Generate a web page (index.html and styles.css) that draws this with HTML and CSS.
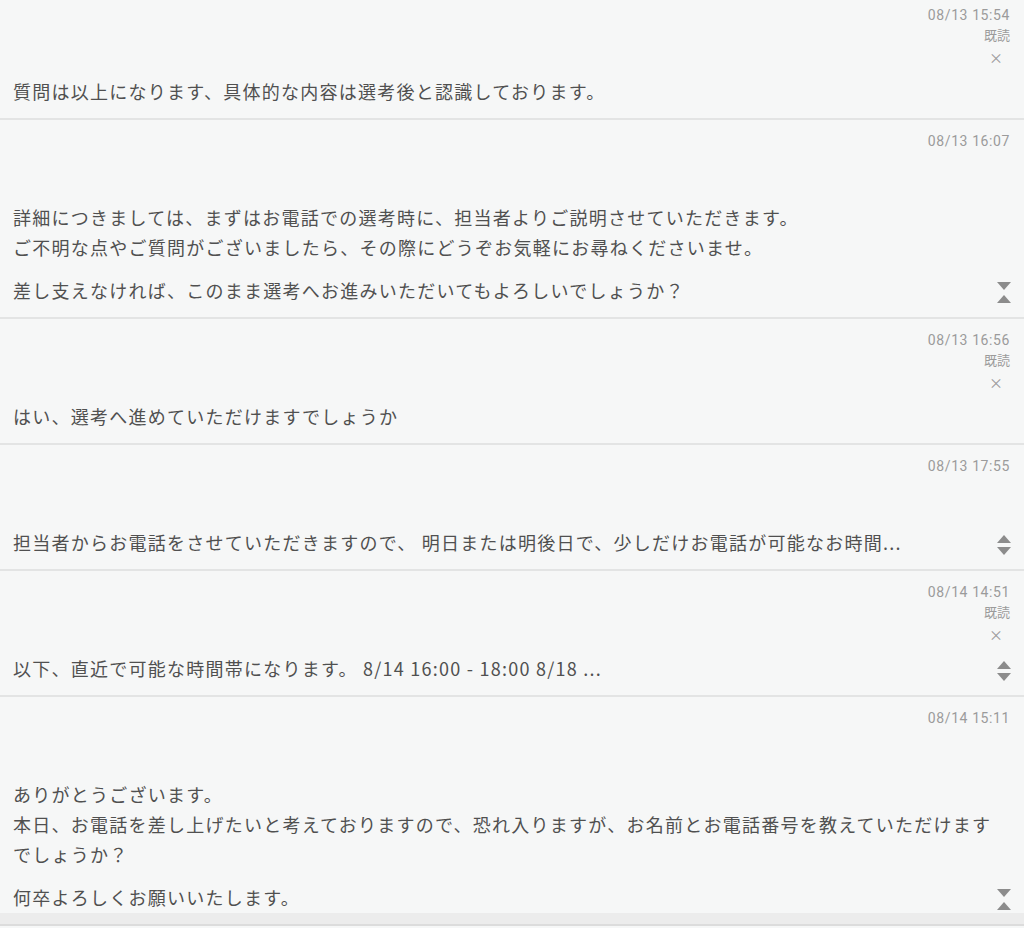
FILE: index.html
```html
<!doctype html>
<html lang="ja">
    <head>
        <meta charset="UTF-8" />
        <meta name="viewport" content="width=device-width, initial-scale=1.0" />
        <title>メッセージ</title>
        <link rel="stylesheet" href="styles.css">
    </head>
    <body>
        <div class="thread">
            <div class="message first">
                <div class="meta">
                    <div class="time">08/13 15:54</div>
                    <div class="read">既読</div>
                    <div class="close">×</div>
                </div>
                <div class="body">
                    <p>質問は以上になります、具体的な内容は選考後と認識しております。</p>
                </div>
            </div>

            <div class="message">
                <div class="meta">
                    <div class="time">08/13 16:07</div>
                </div>
                <div class="body">
                    <p>詳細につきましては、まずはお電話での選考時に、担当者よりご説明させていただきます。<br>ご不明な点やご質問がございましたら、その際にどうぞお気軽にお尋ねくださいませ。</p>
                    <p>差し支えなければ、このまま選考へお進みいただいてもよろしいでしょうか？</p>
                </div>
                <a href="#" class="toggle">
                    <svg width="14" height="21" viewBox="0 0 14 21"><path d="M0 0H14L7 8Z M7 13L14 21H0Z" /></svg>
                </a>
            </div>

            <div class="message">
                <div class="meta">
                    <div class="time">08/13 16:56</div>
                    <div class="read">既読</div>
                    <div class="close">×</div>
                </div>
                <div class="body">
                    <p>はい、選考へ進めていただけますでしょうか</p>
                </div>
            </div>

            <div class="message">
                <div class="meta">
                    <div class="time">08/13 17:55</div>
                </div>
                <div class="body">
                    <p>担当者からお電話をさせていただきますので、 明日または明後日で、少しだけお電話が可能なお時間...</p>
                </div>
                <a href="#" class="toggle">
                    <svg width="14" height="20" viewBox="0 0 14 20"><path d="M7 0L14 8H0Z M0 12H14L7 20Z" /></svg>
                </a>
            </div>

            <div class="message">
                <div class="meta">
                    <div class="time">08/14 14:51</div>
                    <div class="read">既読</div>
                    <div class="close">×</div>
                </div>
                <div class="body">
                    <p>以下、直近で可能な時間帯になります。 8/14 16:00 - 18:00 8/18 ...</p>
                </div>
                <a href="#" class="toggle">
                    <svg width="14" height="20" viewBox="0 0 14 20"><path d="M7 0L14 8H0Z M0 12H14L7 20Z" /></svg>
                </a>
            </div>

            <div class="message last">
                <div class="meta">
                    <div class="time">08/14 15:11</div>
                </div>
                <div class="body">
                    <p>ありがとうございます。<br>本日、お電話を差し上げたいと考えておりますので、恐れ入りますが、お名前とお電話番号を教えていただけますでしょうか？</p>
                    <p>何卒よろしくお願いいたします。</p>
                </div>
                <a href="#" class="toggle">
                    <svg width="14" height="21" viewBox="0 0 14 21"><path d="M0 0H14L7 8Z M7 13L14 21H0Z" /></svg>
                </a>
            </div>
        </div>
    </body>
</html>
```

FILE: styles.css
```css
body {
    margin: 0;
    background-color: #f6f7f7;
    font-family: "Noto Sans CJK JP", "Noto Sans", sans-serif;
    color: #505050;
}
.message {
    position: relative;
    padding: 11px 14px 12px 13px;
    border-bottom: 2px solid #e3e4e4;
}
.message.first {
    padding-top: 5px;
}
.message.last {
    background: linear-gradient(to bottom, transparent calc(100% - 11px), #ececec calc(100% - 11px));
    border-bottom-color: #dcdcdc;
}
.meta {
    height: 71px;
    text-align: right;
    color: #9b9b9b;
    font-family: Roboto, "Noto Sans CJK JP", sans-serif;
    font-size: 14px;
    letter-spacing: 0.6px;
}
.meta .time {
    line-height: 20px;
}
.meta .read {
    line-height: 20px;
    font-family: "Noto Sans CJK JP", sans-serif;
    font-size: 13px;
    letter-spacing: 0;
}
.meta .close {
    line-height: 24px;
    padding-right: 7px;
    font-family: "Noto Sans CJK JP", sans-serif;
    font-size: 14px;
    letter-spacing: 0;
}
.body p {
    margin: 13px 0 0;
    font-size: 18px;
    line-height: 30px;
    letter-spacing: 1.25px;
}
.body p:first-child {
    margin-top: 0;
}
.toggle {
    position: absolute;
    right: 13px;
    bottom: 14px;
    display: block;
    line-height: 0;
}
.toggle svg {
    fill: #8c8c8c;
}
```
